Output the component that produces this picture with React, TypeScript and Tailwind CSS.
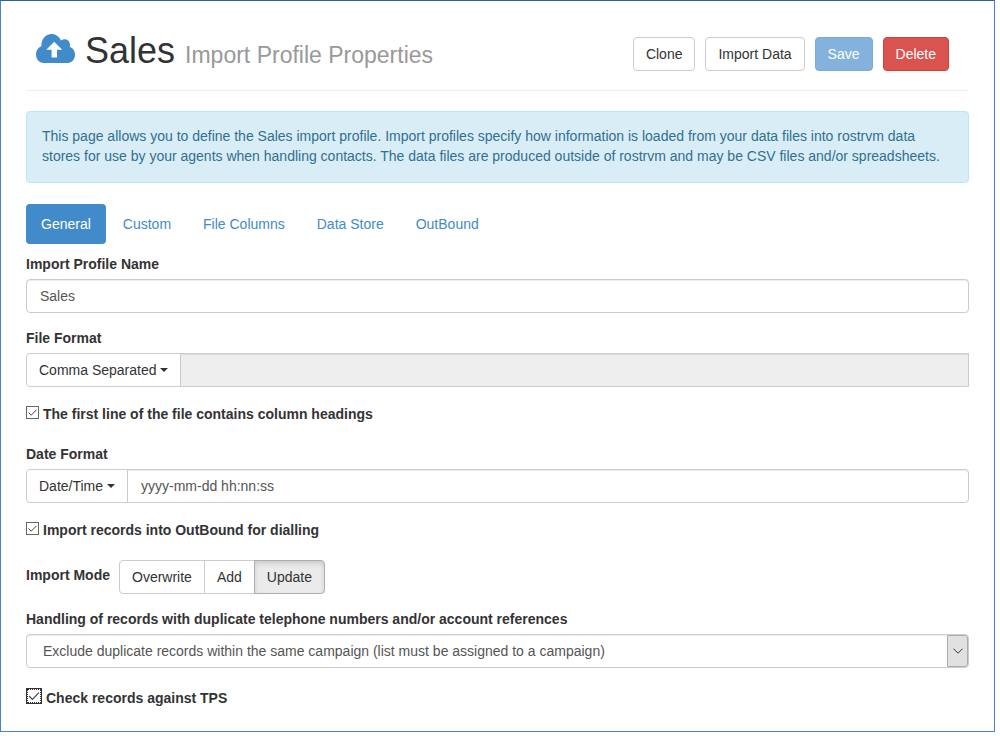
import { useState } from 'react'
import { clsx } from 'clsx'

const tabs = ['General', 'Custom', 'File Columns', 'Data Store', 'OutBound']
const importModes = ['Overwrite', 'Add', 'Update']

const buttonBase = 'h-[34px] rounded-[4px] border px-3 text-sm leading-5'
const fieldBase =
  'h-[34px] min-w-0 border border-[#ccc] px-[13px] text-sm text-[#555] shadow-[inset_0_1px_1px_rgba(0,0,0,0.075)]'

function CloudUploadIcon() {
  return (
    <svg viewBox="0 0 39 29" className="h-[29px] w-[39px] shrink-0 fill-[#428bca]" aria-hidden="true">
      <path
        fillRule="evenodd"
        d="M7.500 29C3.300 29 0 25.300 0 20.500C0 16.500 2.200 13.400 5.400 12.200C5 5.300 9.600 0 15.600 0C19.700 0 23 2.500 25 6.400C26 5.600 27.200 5.200 28.500 5.200C31.700 5.200 34 7.600 34 10.800C34 11.500 33.900 12.200 33.600 12.800C36.900 14 39 17 39 20.800C39 25.400 36 29 32 29ZM18.200 7.800L10.300 15.800H15.600V23.500H21V15.800H26.200Z"
      />
    </svg>
  )
}

function Checkbox({ label, focused = false }: { label: string; focused?: boolean }) {
  return (
    <label className="flex w-fit items-start gap-1 font-bold">
      <span className={clsx('grid shrink-0', focused ? 'h-4 w-4' : 'mt-[2px] h-[13px] w-[13px]')}>
        <input
          type="checkbox"
          defaultChecked
          className={clsx(
            'peer col-start-1 row-start-1 appearance-none border bg-white',
            focused
              ? 'h-4 w-4 border-[#333] outline-1 -outline-offset-2 outline-dotted outline-[#333]'
              : 'h-[13px] w-[13px] border-[#666]'
          )}
        />
        <svg
          viewBox="0 0 13 13"
          className={clsx(
            'pointer-events-none invisible col-start-1 row-start-1 fill-none stroke-[#444] peer-checked:visible',
            focused ? 'h-4 w-4' : 'h-[13px] w-[13px]'
          )}
          aria-hidden="true"
        >
          <path d="M2.500 6.500L5.200 9.200L10.500 3.800" />
        </svg>
      </span>
      {label}
    </label>
  )
}

function FormatSelect({ id, value }: { id: string; value: string }) {
  return (
    <div className="grid shrink-0 items-center">
      <select
        id={id}
        className="col-start-1 row-start-1 h-[34px] appearance-none rounded-l-[4px] border border-[#ccc] bg-white pr-[23px] pl-3 text-sm"
      >
        <option>{value}</option>
      </select>
      <svg
        viewBox="0 0 8 4"
        className="pointer-events-none col-start-1 row-start-1 mr-[13px] h-1 w-2 justify-self-end fill-[#333]"
        aria-hidden="true"
      >
        <path d="M0 0H8L4 4Z" />
      </svg>
    </div>
  )
}

export default function App() {
  const [activeTab, setActiveTab] = useState('General')
  const [mode, setMode] = useState('Update')

  return (
    <main className="mr-[5px] border border-[#4a80d0] border-t-[#2a6293] bg-white px-[25px] pb-[23px] font-['Liberation_Sans',Arial,sans-serif] text-sm leading-5 text-[#333]">
      <header className="flex items-end justify-between border-b border-[#eee] pt-[30px] pr-5 pb-[19px] pl-[10px]">
        <div className="flex items-start gap-[10px]">
          <div className="pt-[3px]">
            <CloudUploadIcon />
          </div>
          <h1 className="text-[36px] leading-10 font-normal">
            Sales <small className="text-[23px] leading-6 text-[#999]">Import Profile Properties</small>
          </h1>
        </div>
        <div className="flex gap-[10px]">
          <button className={clsx(buttonBase, 'border-[#ccc] bg-white')}>Clone</button>
          <button className={clsx(buttonBase, 'border-[#ccc] bg-white')}>Import Data</button>
          <button disabled className={clsx(buttonBase, 'border-[#357ebd] bg-[#428bca] text-white opacity-65')}>
            Save
          </button>
          <button className={clsx(buttonBase, 'border-[#d43f3a] bg-[#d9534f] text-white')}>Delete</button>
        </div>
      </header>

      <p className="mt-5 rounded-[4px] border border-[#bce8f1] bg-[#d9edf7] px-[15px] pt-[14px] pb-4 text-[#31708f]">
        This page allows you to define the Sales import profile. Import profiles specify how information is loaded
        from your data files into rostrvm data stores for use by your agents when handling contacts. The data files
        are produced outside of rostrvm and may be CSV files and/or spreadsheets.
      </p>

      <nav className="mt-[21px] flex gap-[2px]" aria-label="Profile sections">
        {tabs.map((tab) => (
          <a
            key={tab}
            href="#"
            onClick={() => setActiveTab(tab)}
            aria-current={tab === activeTab ? 'page' : undefined}
            className={clsx(
              'rounded-[4px] px-[15px] py-[10px]',
              tab === activeTab ? 'bg-[#428bca] text-white' : 'text-[#428bca]'
            )}
          >
            {tab}
          </a>
        ))}
      </nav>

      <form className="mt-[10px] flex flex-col gap-[15px]">
        <div className="flex flex-col gap-[5px]">
          <label htmlFor="name" className="font-bold">Import Profile Name</label>
          <input id="name" type="text" defaultValue="Sales" className={clsx(fieldBase, 'rounded-[4px]')} />
        </div>

        <div className="flex flex-col gap-[5px]">
          <label htmlFor="file-format" className="font-bold">File Format</label>
          <div className="flex">
            <FormatSelect id="file-format" value="Comma Separated" />
            <input
              type="text"
              disabled
              aria-label="Custom separator"
              className={clsx(fieldBase, '-ml-px flex-1 bg-[#eee]')}
            />
          </div>
        </div>

        <div className="mt-[2px]">
          <Checkbox label="The first line of the file contains column headings" />
        </div>

        <div className="mt-[5px] flex flex-col gap-[5px]">
          <label htmlFor="date-format" className="font-bold">Date Format</label>
          <div className="flex">
            <FormatSelect id="date-format" value="Date/Time" />
            <input
              type="text"
              defaultValue="yyyy-mm-dd hh:nn:ss"
              aria-label="Date pattern"
              className={clsx(fieldBase, '-ml-px flex-1 rounded-r-[4px]')}
            />
          </div>
        </div>

        <div className="mt-[2px]">
          <Checkbox label="Import records into OutBound for dialling" />
        </div>

        <div className="mt-[5px] flex items-center gap-[9px]" role="group" aria-labelledby="mode-label">
          <span id="mode-label" className="pb-1 font-bold">Import Mode</span>
          <div className="flex">
            {importModes.map((item) => (
              <button
                key={item}
                type="button"
                aria-pressed={item === mode}
                onClick={() => setMode(item)}
                className={clsx(
                  '-ml-px h-[34px] border px-3 text-sm first:ml-0 first:rounded-l-[4px] last:rounded-r-[4px]',
                  item === mode
                    ? 'z-10 border-[#adadad] bg-[#ebebeb] shadow-[inset_0_3px_5px_rgba(0,0,0,0.125)]'
                    : 'border-[#ccc] bg-white'
                )}
              >
                {item}
              </button>
            ))}
          </div>
        </div>

        <div className="flex flex-col gap-[5px]">
          <label htmlFor="duplicates" className="font-bold">
            Handling of records with duplicate telephone numbers and/or account references
          </label>
          <div className="grid">
            <select
              id="duplicates"
              className="col-start-1 row-start-1 h-[34px] min-w-0 appearance-none rounded-[4px] border border-[#ccc] bg-white pr-6 pl-4 text-sm text-[#555] shadow-[inset_0_1px_1px_rgba(0,0,0,0.075)]"
            >
              <option>Exclude duplicate records within the same campaign (list must be assigned to a campaign)</option>
            </select>
            <span className="pointer-events-none col-start-1 row-start-1 mr-px flex h-8 w-[21px] items-center justify-center self-center justify-self-end rounded-r-[3px] border border-[#adadad] bg-[#e1e1e1]">
              <svg viewBox="0 0 10 6" className="h-[6px] w-[10px] fill-none stroke-[#333]" aria-hidden="true">
                <path d="M0.500 0.700L5 5.200L9.500 0.700" />
              </svg>
            </span>
          </div>
        </div>

        <div className="mt-[5px]">
          <Checkbox label="Check records against TPS" focused />
        </div>
      </form>
    </main>
  )
}
